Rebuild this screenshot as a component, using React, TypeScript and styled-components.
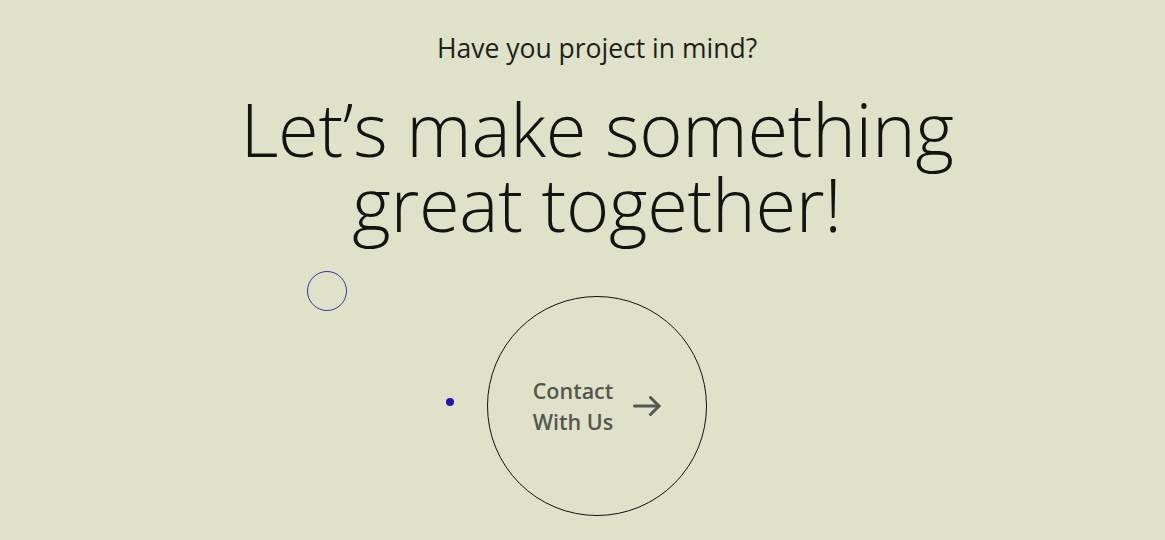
import React from "react";
import styled, { createGlobalStyle } from "styled-components";

const Global = createGlobalStyle`
  html, body { margin: 0; padding: 0; background: #dfe1c9; }
  body { font-family: "Open Sans", "Noto Sans", sans-serif; }
`;

const Page = styled.section`
  position: relative;
  width: 100%;
  height: 540px;
  overflow: hidden;
  background: #dfe1c9;
  display: flex;
  flex-direction: column;
  align-items: center;
  padding: 30px 0 0 29px;
  box-sizing: border-box;
`;

const Eyebrow = styled.p`
  margin: 0;
  font-size: 26.5px;
  font-weight: 400;
  line-height: 36px;
  color: #1d1f1a;
`;

const Heading = styled.h1`
  margin: 25px 0 0;
  font-size: 74px;
  font-weight: 300;
  line-height: 75px;
  color: #121410;
  text-align: center;
  letter-spacing: -0.3px;
`;

const CircleButton = styled.a`
  margin-top: 55px;
  width: 220px;
  height: 220px;
  border: 1px solid #111;
  border-radius: 50%;
  box-sizing: border-box;
  display: flex;
  align-items: center;
  justify-content: center;
  gap: 20px;
  color: #555650;
  text-decoration: none;
  cursor: pointer;
`;

const Label = styled.span`
  font-size: 21.5px;
  font-weight: 600;
  line-height: 31px;
  text-align: center;
`;

const Ring = styled.div`
  position: absolute;
  left: 307px;
  top: 271px;
  width: 40px;
  height: 40px;
  border: 1px solid #3a34a8;
  border-radius: 50%;
  box-sizing: border-box;
  pointer-events: none;
`;

const Dot = styled.div`
  position: absolute;
  left: 446px;
  top: 398px;
  width: 8px;
  height: 8px;
  background: #1f14b8;
  border-radius: 50%;
  pointer-events: none;
`;

const Arrow = () => (
  <svg width="28" height="24" viewBox="0 0 28 24" fill="none" stroke="#555650" strokeWidth="3" strokeLinecap="round" strokeLinejoin="round">
    <path d="M1.5 12H26" />
    <path d="M17.5 3.5 26 12 17.5 20.5" />
  </svg>
);

export default function App() {
  return (
    <>
      <Global />
      <Page>
        <Eyebrow>Have you project in mind?</Eyebrow>
        <Heading>
          Let’s make something
          <br />
          great together!
        </Heading>
        <CircleButton>
          <Label>
            Contact
            <br />
            With Us
          </Label>
          <Arrow />
        </CircleButton>
        <Ring />
        <Dot />
      </Page>
    </>
  );
}
